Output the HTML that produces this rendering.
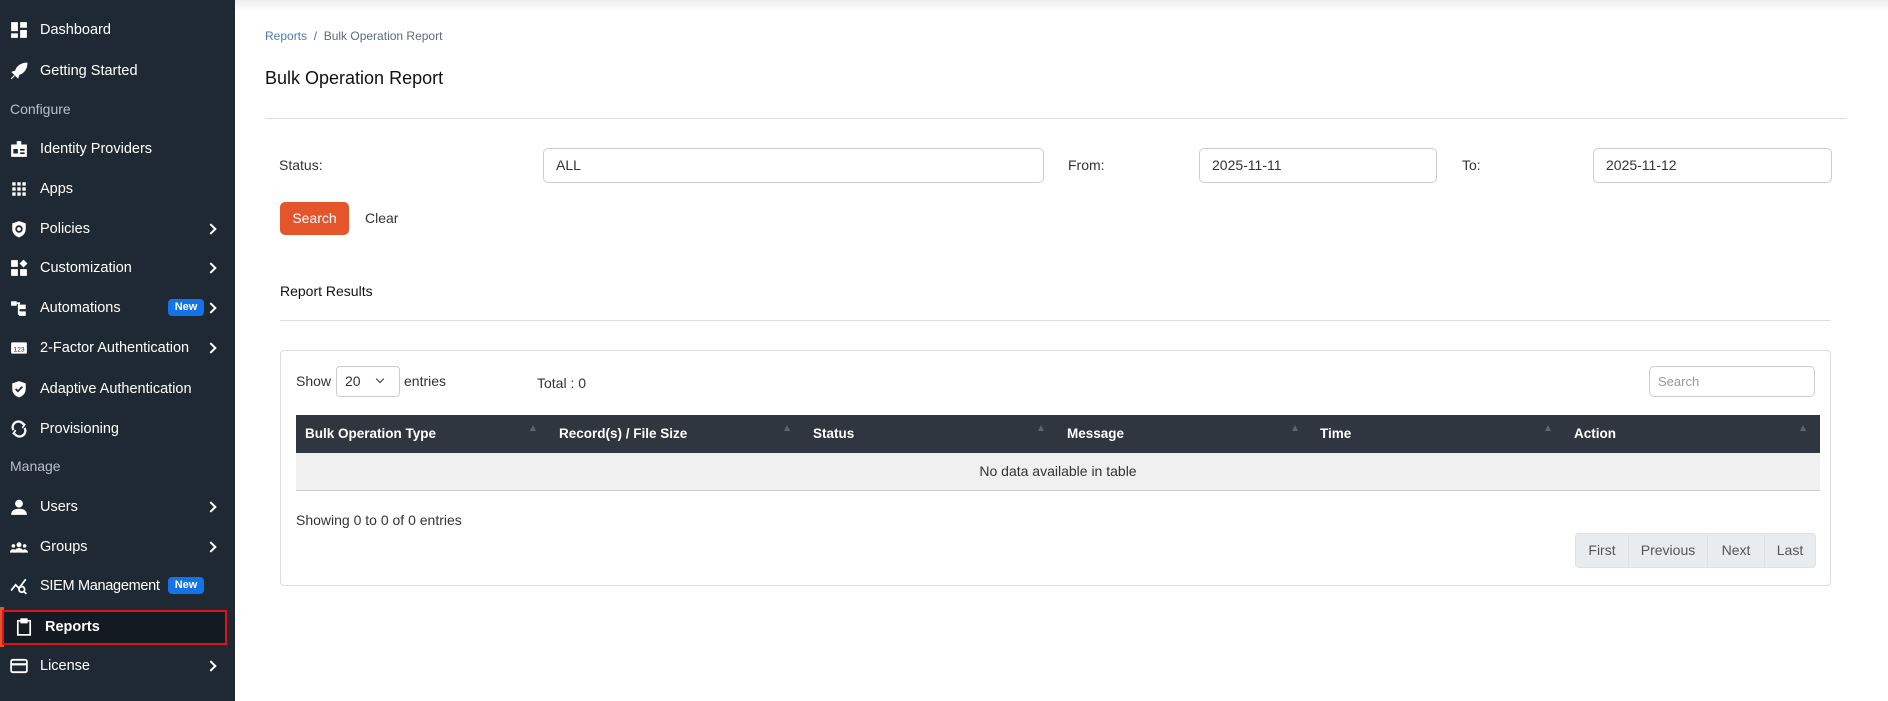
<!DOCTYPE html>
<html><head><meta charset="utf-8"><style>
*{box-sizing:border-box;margin:0;padding:0}
body{width:1888px;height:701px;overflow:hidden;font-family:"Liberation Sans",sans-serif;background:#fff;position:relative;color:#212529}
.sb{position:absolute;left:0;top:0;width:235px;height:701px;background:#1f2933}
.it{position:absolute;left:0;width:235px;height:40px;color:#fff;font-size:14.5px;display:flex;align-items:center}
.it svg{position:absolute;left:10px;width:18px;height:18px}
.it .t{position:absolute;left:40px}
.it .ch{position:absolute;left:207px;border-right:2px solid #fff;border-top:2px solid #fff;transform:rotate(45deg);width:8px;height:8px}
.new{position:absolute;left:168px;width:36px;height:17px;background:#1473e6;border-radius:4px;color:#fff;font-size:11px;font-weight:bold;text-align:center;line-height:17px}
.sec{position:absolute;left:10px;color:#b9c0c8;font-size:14px}
.a{position:absolute;white-space:nowrap}
.inp{position:absolute;border:1px solid #ccc;border-radius:5px;height:35px;font-size:14px;padding-left:12px;line-height:33px;color:#333}
.th{position:absolute;top:415px;height:38px;line-height:38px;color:#fff;font-weight:bold;font-size:13.5px}
.ar{position:absolute;top:425px;width:0;height:0;border-left:3px solid transparent;border-right:3px solid transparent;border-bottom:6px solid #5b6470}
.pg{position:absolute;top:0;height:33px;text-align:center;border-right:1px solid #dee2e6}
</style></head><body>
<div class="sb">
<div class="it" style="top:10px"><svg viewBox="0 0 16 16"><rect x="1" y="1" width="6" height="8" fill="#fff"/><rect x="9" y="1" width="6" height="5" fill="#fff"/><rect x="1" y="11" width="6" height="4" fill="#fff"/><rect x="9" y="8" width="6" height="7" fill="#fff"/></svg><span class="t">Dashboard</span></div>
<div class="it" style="top:51px"><svg viewBox="0 0 16 16"><path d="M15 1C10 1 6 4 5 8L8 11C12 10 15 6 15 1Z M2 9l3-1 3 3-1 3z M1 15l3-3" fill="#fff" stroke="#fff"/></svg><span class="t">Getting Started</span></div>
<div class="sec" style="top:101px">Configure</div>
<div class="it" style="top:129px"><svg viewBox="0 0 16 16"><rect x="1" y="4" width="14" height="11" fill="#fff"/><rect x="6" y="1" width="4" height="5" fill="#fff"/><rect x="3" y="8" width="4" height="4" fill="#1f2933"/><rect x="9" y="8" width="4" height="1.5" fill="#1f2933"/><rect x="9" y="11" width="4" height="1.5" fill="#1f2933"/></svg><span class="t">Identity Providers</span></div>
<div class="it" style="top:169px"><svg viewBox="0 0 16 16" fill="#fff"><rect x="2" y="2" width="3" height="3"/><rect x="6.5" y="2" width="3" height="3"/><rect x="11" y="2" width="3" height="3"/><rect x="2" y="6.5" width="3" height="3"/><rect x="6.5" y="6.5" width="3" height="3"/><rect x="11" y="6.5" width="3" height="3"/><rect x="2" y="11" width="3" height="3"/><rect x="6.5" y="11" width="3" height="3"/><rect x="11" y="11" width="3" height="3"/></svg><span class="t">Apps</span></div>
<div class="it" style="top:209px"><svg viewBox="0 0 16 16"><path d="M8 1L14 3V8C14 12 11 14.5 8 15.5C5 14.5 2 12 2 8V3Z" fill="#fff"/><circle cx="8" cy="8" r="2.5" fill="none" stroke="#1f2933" stroke-width="1.6"/></svg><span class="t">Policies</span><span class="ch"></span></div>
<div class="it" style="top:248px"><svg viewBox="0 0 16 16" fill="#fff"><rect x="1" y="1" width="6" height="6"/><path d="M12 0.5L15.5 4 12 7.5 8.5 4Z"/><rect x="1" y="9" width="6" height="6"/><rect x="9" y="9" width="6" height="6"/></svg><span class="t">Customization</span><span class="ch"></span></div>
<div class="it" style="top:288px"><svg viewBox="0 0 16 16" fill="#fff"><rect x="1" y="2" width="5" height="4"/><rect x="8" y="5" width="6" height="4"/><rect x="8" y="11" width="6" height="4"/><rect x="6" y="3" width="3" height="1.5"/><rect x="7" y="3" width="1.5" height="11"/></svg><span class="t">Automations</span><span class="new" style="top:11px">New</span><span class="ch"></span></div>
<div class="it" style="top:328px"><svg viewBox="0 0 16 16"><rect x="1" y="3" width="14" height="10" rx="1" fill="#fff"/><text x="8" y="11" font-size="6" text-anchor="middle" fill="#1f2933" font-family="Liberation Sans">123</text></svg><span class="t">2-Factor Authentication</span><span class="ch"></span></div>
<div class="it" style="top:369px"><svg viewBox="0 0 16 16"><path d="M8 1L14 3V8C14 12 11 14.5 8 15.5C5 14.5 2 12 2 8V3Z" fill="#fff"/><path d="M5 8l2 2 4-4" fill="none" stroke="#1f2933" stroke-width="1.6"/></svg><span class="t">Adaptive Authentication</span></div>
<div class="it" style="top:409px"><svg viewBox="0 0 16 16" fill="none" stroke="#fff" stroke-width="2"><path d="M3 9A5 5 0 0 1 12 4"/><path d="M13 7A5 5 0 0 1 4 12"/><path d="M10 2l3 2-2 3M6 14l-3-2 2-3" stroke-width="1.5"/></svg><span class="t">Provisioning</span></div>
<div class="sec" style="top:458px">Manage</div>
<div class="it" style="top:487px"><svg viewBox="0 0 16 16" fill="#fff"><circle cx="8" cy="5" r="3.5"/><path d="M1 15c0-4 3-5.5 7-5.5s7 1.5 7 5.5z"/></svg><span class="t">Users</span><span class="ch"></span></div>
<div class="it" style="top:527px"><svg viewBox="0 0 16 16" fill="#fff"><circle cx="8" cy="6" r="2.2"/><circle cx="3" cy="7" r="1.6"/><circle cx="13" cy="7" r="1.6"/><path d="M4 13c0-3 2-4 4-4s4 1 4 4z"/><path d="M0 13c0-2 1-3 3-3s2 1 2 3zM11 13c0-2 1-3 2-3s3 1 3 3z"/></svg><span class="t">Groups</span><span class="ch"></span></div>
<div class="it" style="top:566px"><svg viewBox="0 0 16 16" fill="none" stroke="#fff" stroke-width="1.6"><path d="M1 12l4-5 3 3 6-8"/><circle cx="10.5" cy="11" r="2.5"/><path d="M12.5 13l2 2"/></svg><span class="t" style="letter-spacing:-0.3px">SIEM Management</span><span class="new" style="top:11px">New</span></div>
<div style="position:absolute;left:0;top:607px;width:4px;height:40px;background:#e0552b"></div>
<div style="position:absolute;left:2px;top:610px;width:225px;height:35px;background:#131a22;border:2px solid #e0111a"></div>
<div class="it" style="top:607px"><svg viewBox="0 0 16 16" style="left:15px" fill="none" stroke="#fff" stroke-width="1.5"><rect x="2.5" y="2.5" width="11" height="12.5"/><rect x="5.5" y="1" width="5" height="3" fill="#fff"/></svg><span class="t" style="left:45px;font-weight:bold">Reports</span></div>
<div class="it" style="top:646px"><svg viewBox="0 0 16 16" fill="none" stroke="#fff" stroke-width="1.6"><rect x="1" y="2.5" width="14" height="11" rx="1.5"/><path d="M1 6.5h14" stroke-width="2"/></svg><span class="t">License</span><span class="ch"></span></div>
</div>
<div style="position:absolute;left:235px;top:0;width:1653px;height:12px;background:linear-gradient(#eee,#fff)"></div>
<div class="a" style="left:265px;top:29px;font-size:12px;color:#5a6b7b"><span style="color:#4a7ab0">Reports</span>&nbsp; / &nbsp;Bulk Operation Report</div>
<div class="a" style="left:265px;top:68px;font-size:18px;color:#111">Bulk Operation Report</div>
<div style="position:absolute;left:265px;top:118px;width:1582px;height:1px;background:#ddd"></div>
<div class="a" style="left:279px;top:157px;font-size:14px;color:#333">Status:</div>
<div class="inp" style="left:543px;top:148px;width:501px">ALL</div>
<div class="a" style="left:1068px;top:157px;font-size:14px;color:#333">From:</div>
<div class="inp" style="left:1199px;top:148px;width:238px">2025-11-11</div>
<div class="a" style="left:1462px;top:157px;font-size:14px;color:#333">To:</div>
<div class="inp" style="left:1593px;top:148px;width:239px">2025-11-12</div>
<div style="position:absolute;left:280px;top:202px;width:69px;height:33px;background:#e5552b;border-radius:5px;color:#fff;font-size:14px;text-align:center;line-height:33px">Search</div>
<div class="a" style="left:365px;top:210px;font-size:14px;color:#333">Clear</div>
<div class="a" style="left:280px;top:283px;font-size:14px;color:#111">Report Results</div>
<div style="position:absolute;left:280px;top:320px;width:1551px;height:1px;background:#ddd"></div>
<div style="position:absolute;left:280px;top:350px;width:1551px;height:236px;border:1px solid #ddd;border-radius:4px"></div>
<div class="a" style="left:296px;top:373px;font-size:14px;color:#333">Show</div>
<div style="position:absolute;left:336px;top:366px;width:64px;height:31px;border:1px solid #ccc;border-radius:4px;font-size:14px;padding:6px 0 0 8px;color:#333">20<span style="position:absolute;left:40px;top:9px;width:6px;height:6px;border-right:1.5px solid #333;border-bottom:1.5px solid #333;transform:rotate(45deg)"></span></div>
<div class="a" style="left:404px;top:373px;font-size:14px;color:#333">entries</div>
<div class="a" style="left:537px;top:375px;font-size:14px;color:#333">Total : 0</div>
<div class="inp" style="left:1649px;top:366px;width:166px;height:31px;line-height:29px;font-size:13px;color:#999;padding-left:8px">Search</div>
<div style="position:absolute;left:296px;top:415px;width:1524px;height:38px;background:#2f363f"></div>
<div class="th" style="left:305px">Bulk Operation Type</div><div class="ar" style="left:530px"></div>
<div class="th" style="left:559px">Record(s) / File Size</div><div class="ar" style="left:784px"></div>
<div class="th" style="left:813px">Status</div><div class="ar" style="left:1038px"></div>
<div class="th" style="left:1067px">Message</div><div class="ar" style="left:1292px"></div>
<div class="th" style="left:1320px">Time</div><div class="ar" style="left:1545px"></div>
<div class="th" style="left:1574px">Action</div><div class="ar" style="left:1800px"></div>
<div style="position:absolute;left:296px;top:453px;width:1524px;height:38px;background:#f0f0f0;border-bottom:1px solid #ccc;text-align:center;line-height:37px;font-size:14px;color:#333">No data available in table</div>
<div class="a" style="left:296px;top:512px;font-size:14px;color:#333">Showing 0 to 0 of 0 entries</div>
<div style="position:absolute;left:1575px;top:533px;width:241px;height:35px;background:#e9ecef;border:1px solid #dee2e6;border-radius:4px;font-size:14px;color:#555;line-height:33px">
<span class="pg" style="left:0;width:53px">First</span>
<span class="pg" style="left:53px;width:79px">Previous</span>
<span class="pg" style="left:132px;width:57px">Next</span>
<span class="pg" style="left:189px;width:50px;border-right:none">Last</span></div>
</body></html>
